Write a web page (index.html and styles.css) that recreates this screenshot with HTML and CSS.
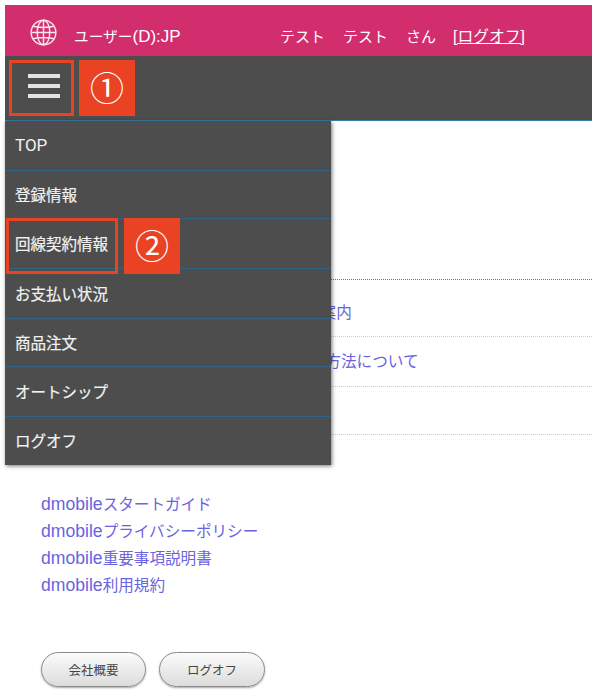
FILE: index.html
```html
<!DOCTYPE html>
<html lang="ja">
<head>
<meta charset="utf-8">
<title>dmobile</title>
<link rel="stylesheet" href="styles.css">
</head>
<body>
<div class="page">
  <header class="topbar">
    <svg class="globe" viewBox="0 0 28 28" width="27" height="27" fill="none" stroke="#fbe3ec" stroke-width="1.5">
      <circle cx="14" cy="14" r="12.8"/>
      <ellipse cx="14" cy="14" rx="6.5" ry="12.8"/>
      <path d="M14 1.2v25.6M1.2 14h25.6M3.2 7.6Q14 10 24.8 7.6M3.2 20.4Q14 18 24.8 20.4"/>
    </svg>
    <span class="user">ユーザー<span class="lat-user">(D):JP</span></span>
    <span class="name">テスト</span>
    <span class="name">テスト</span>
    <span class="san">さん</span>
    <a class="logoff" href="#">[ログオフ]</a>
  </header>
  <div class="toolbar">
    <button class="burger" type="button" aria-label="menu"><i></i><i></i><i></i></button>
  </div>
  <main class="content">
    <ul class="news">
      <li><a href="#">ご案内</a></li>
      <li><a href="#">お支払い方法について</a></li>
      <li></li>
    </ul>
    <ul class="links">
      <li><a href="#"><span class="lat">dmobile</span>スタートガイド</a></li>
      <li><a href="#"><span class="lat">dmobile</span>プライバシーポリシー</a></li>
      <li><a href="#"><span class="lat">dmobile</span>重要事項説明書</a></li>
      <li><a href="#"><span class="lat">dmobile</span>利用規約</a></li>
    </ul>
    <div class="buttons">
      <a class="pill" href="#">会社概要</a>
      <a class="pill" href="#">ログオフ</a>
    </div>
  </main>
  <nav class="menu">
    <a class="h50 top" href="#">TOP</a>
    <a class="h48" href="#">登録情報</a>
    <a class="h50" href="#">回線契約情報</a>
    <a class="h50" href="#">お支払い状況</a>
    <a class="h48" href="#">商品注文</a>
    <a class="h50" href="#">オートシップ</a>
    <a class="h48 last" href="#">ログオフ</a>
  </nav>
  <div class="mark box1"></div>
  <div class="mark box2"></div>
  <div class="tag tag1">①</div>
  <div class="tag tag2">②</div>
</div>
</body>
</html>
```
FILE: styles.css
```css
* { box-sizing: border-box; }
html, body { margin: 0; padding: 0; background: #fff; }
body {
  width: 592px;
  height: 696px;
  overflow: hidden;
  font-family: "Liberation Sans", "Noto Sans CJK JP", sans-serif;
}
a { text-decoration: none; color: inherit; }
ul { list-style: none; margin: 0; padding: 0; }

.page { position: relative; padding: 5px 0 0 5px; height: 696px; }

.topbar {
  height: 51px;
  background: #d22e6e;
  color: #fff;
  display: flex;
  align-items: center;
  font-size: 15px;
  padding: 10px 0 0 25px;
}
.globe { flex: none; margin-top: -7px; }
.user { margin-left: 17px; width: 206px; font-size: 14.7px; }
.lat-user { font-size: 17px; }
.name { margin-right: 18px; }
.san { margin-right: 17px; }
.logoff { text-decoration: underline; font-size: 15.8px; }

.toolbar {
  height: 65px;
  background: #4d4d4d;
  border-bottom: 1px solid #3f7ea6;
  padding: 18px 0 0 23px;
}
.burger {
  display: flex;
  flex-direction: column;
  gap: 6px;
  padding: 0;
  border: 0;
  background: none;
  width: 32px;
}
.burger i { display: block; height: 4px; width: 32px; background: #e2e2e2; }

.content { padding-top: 158px; }

.news { border-top: 1px dotted #3f7ea6; }
.news li {
  border-bottom: 1px dotted #ccc;
  font-size: 15.6px;
  line-height: 22px;
  color: #6a63e0;
  white-space: nowrap;
}
.news li:nth-child(1) { height: 57px; padding: 22px 0 0 300px; }
.news li:nth-child(2) { height: 50px; padding: 14px 0 0 258px; }
.news li:nth-child(3) { height: 48px; }

.links {
  margin-top: 56px;
  padding-left: 36px;
  font-size: 15.6px;
  color: #6a63e0;
}
.links li { height: 27px; line-height: 27px; }
.lat { font-size: 17.6px; }

.buttons { display: flex; gap: 13px; padding: 53px 0 0 36px; }
.pill {
  width: 105px;
  height: 35px;
  border-radius: 18px;
  border: 1.5px solid #8c8c8c;
  background: linear-gradient(#fbfbfb, #dcdcdc);
  box-shadow: 0 1px 2px rgba(0,0,0,.35);
  color: #444;
  font-size: 12.5px;
  display: flex;
  align-items: center;
  justify-content: center;
}
.pill:last-child { width: 106px; }

.menu {
  position: absolute;
  left: 5px;
  top: 121px;
  width: 326px;
  background: #4d4d4d;
  box-shadow: 1px 1px 4px rgba(0,0,0,.55);
  color: #f2f2f2;
  font-size: 15.5px;
  -webkit-text-stroke: .2px #f2f2f2;
}
.menu a {
  display: flex;
  align-items: center;
  padding: 0 0 2px 10px;
  border-bottom: 1px solid #2f6487;
}
.menu .h50 { height: 50px; }
.menu .h48 { height: 48px; }
.menu .top { font-family: Roboto, "Liberation Sans", sans-serif; font-size: 17px; -webkit-text-stroke: 0; }
.menu .last { border-bottom: 0; }

.mark { position: absolute; border: 3px solid #e94324; }
.box1 { left: 9px; top: 60px; width: 65px; height: 56px; }
.box2 { left: 6px; top: 218px; width: 112px; height: 56px; }

.tag {
  position: absolute;
  width: 56px;
  height: 56px;
  background: #e94324;
  color: #fff;
  font-family: "Noto Sans CJK JP", sans-serif;
  font-size: 34px;
  font-weight: 400;
  line-height: 54px;
  text-align: center;
}
.tag1 { left: 79px; top: 60px; }
.tag2 { left: 124px; top: 218px; }
```
